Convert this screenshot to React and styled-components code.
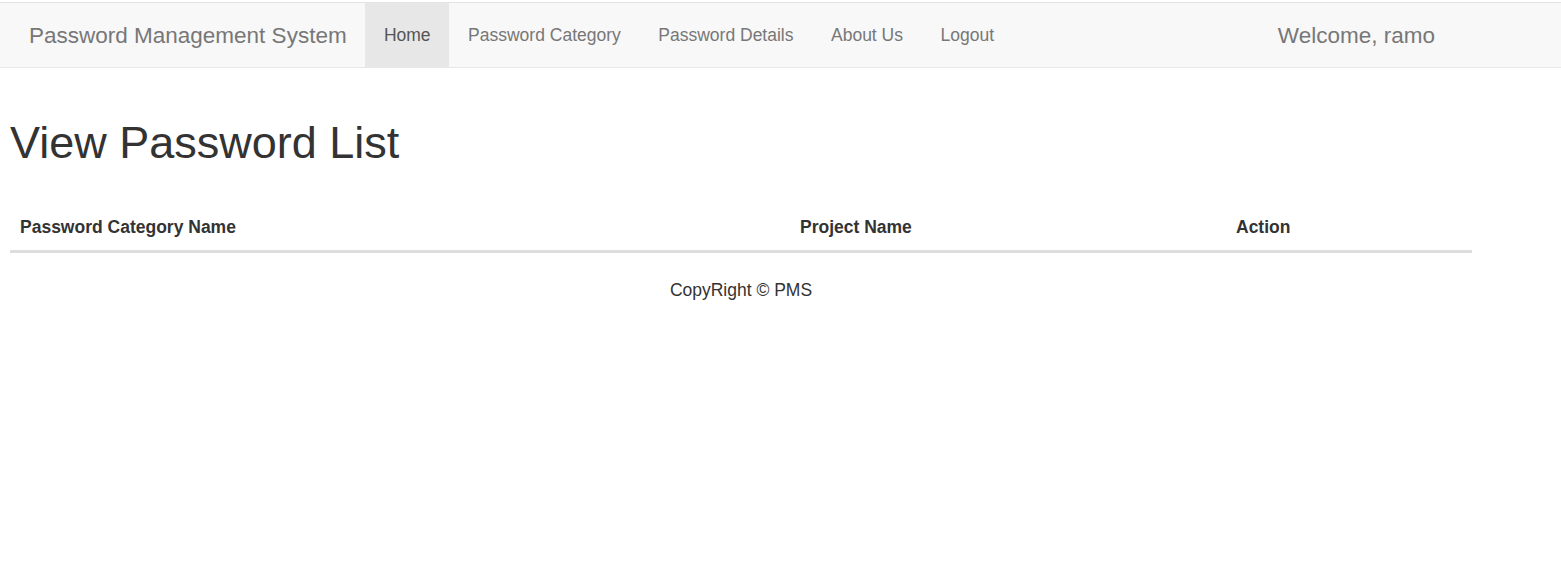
import React from "react";
import styled, { createGlobalStyle } from "styled-components";

const GlobalStyle = createGlobalStyle`
  html, body {
    margin: 0;
    padding: 0;
    background: #fff;
    font-family: "Liberation Sans", Arial, Helvetica, sans-serif;
    color: #333;
  }
`;

const Navbar = styled.nav`
  margin-top: 2px;
  height: 64px;
  background: #f8f8f8;
  border-top: 1px solid #e3e3e3;
  border-bottom: 1px solid #e7e7e7;
  display: flex;
  align-items: stretch;
  padding-left: 10px;
`;

const Brand = styled.a`
  display: flex;
  align-items: center;
  padding: 0 18.5px 0 19px;
  font-size: 22.5px;
  line-height: 25px;
  color: #777;
  text-decoration: none;
  cursor: pointer;
`;

const NavList = styled.ul`
  display: flex;
  list-style: none;
  margin: 0;
  padding: 0;
`;

const NavItem = styled.li`
  display: flex;
`;

const NavLink = styled.a`
  display: flex;
  align-items: center;
  padding: 0 18.75px;
  font-size: 17.5px;
  line-height: 25px;
  text-decoration: none;
  cursor: pointer;
  color: ${(p) => (p.$active ? "#555" : "#777")};
  background: ${(p) => (p.$active ? "#e7e7e7" : "transparent")};
`;

const Welcome = styled.div`
  margin-left: auto;
  margin-right: 126px;
  display: flex;
  align-items: center;
  font-size: 22.5px;
  line-height: 25px;
  color: #777;
`;

const Main = styled.main`
  padding: 0 10px;
`;

const Title = styled.h1`
  margin: 50px 0 37px;
  font-size: 45px;
  line-height: 49.5px;
  font-weight: 400;
  color: #333;
`;

const Table = styled.table`
  width: 1462px;
  table-layout: fixed;
  border-collapse: collapse;
  border-spacing: 0;
  margin-bottom: 25px;
`;

const HeadCell = styled.th`
  box-sizing: border-box;
  width: ${(p) => p.$width}px;
  text-align: left;
  padding: 10px;
  font-size: 17.5px;
  line-height: 25px;
  font-weight: 700;
  color: #333;
  border-bottom: 3px solid #ddd;
  vertical-align: bottom;
`;

const Footer = styled.footer`
  width: 1462px;
  text-align: center;
  font-size: 17.5px;
  line-height: 25px;
  color: #333;
`;

const links = ["Home", "Password Category", "Password Details", "About Us", "Logout"];

export default function App() {
  return (
    <>
      <GlobalStyle />
      <Navbar>
        <Brand>Password Management System</Brand>
        <NavList>
          {links.map((l, i) => (
            <NavItem key={l}>
              <NavLink $active={i === 0}>{l}</NavLink>
            </NavItem>
          ))}
        </NavList>
        <Welcome>Welcome, ramo</Welcome>
      </Navbar>
      <Main>
        <Title>View Password List</Title>
        <Table>
          <thead>
            <tr>
              <HeadCell $width={780}>Password Category Name</HeadCell>
              <HeadCell $width={436}>Project Name</HeadCell>
              <HeadCell $width={246}>Action</HeadCell>
            </tr>
          </thead>
          <tbody></tbody>
        </Table>
        <Footer>CopyRight © PMS</Footer>
      </Main>
    </>
  );
}
